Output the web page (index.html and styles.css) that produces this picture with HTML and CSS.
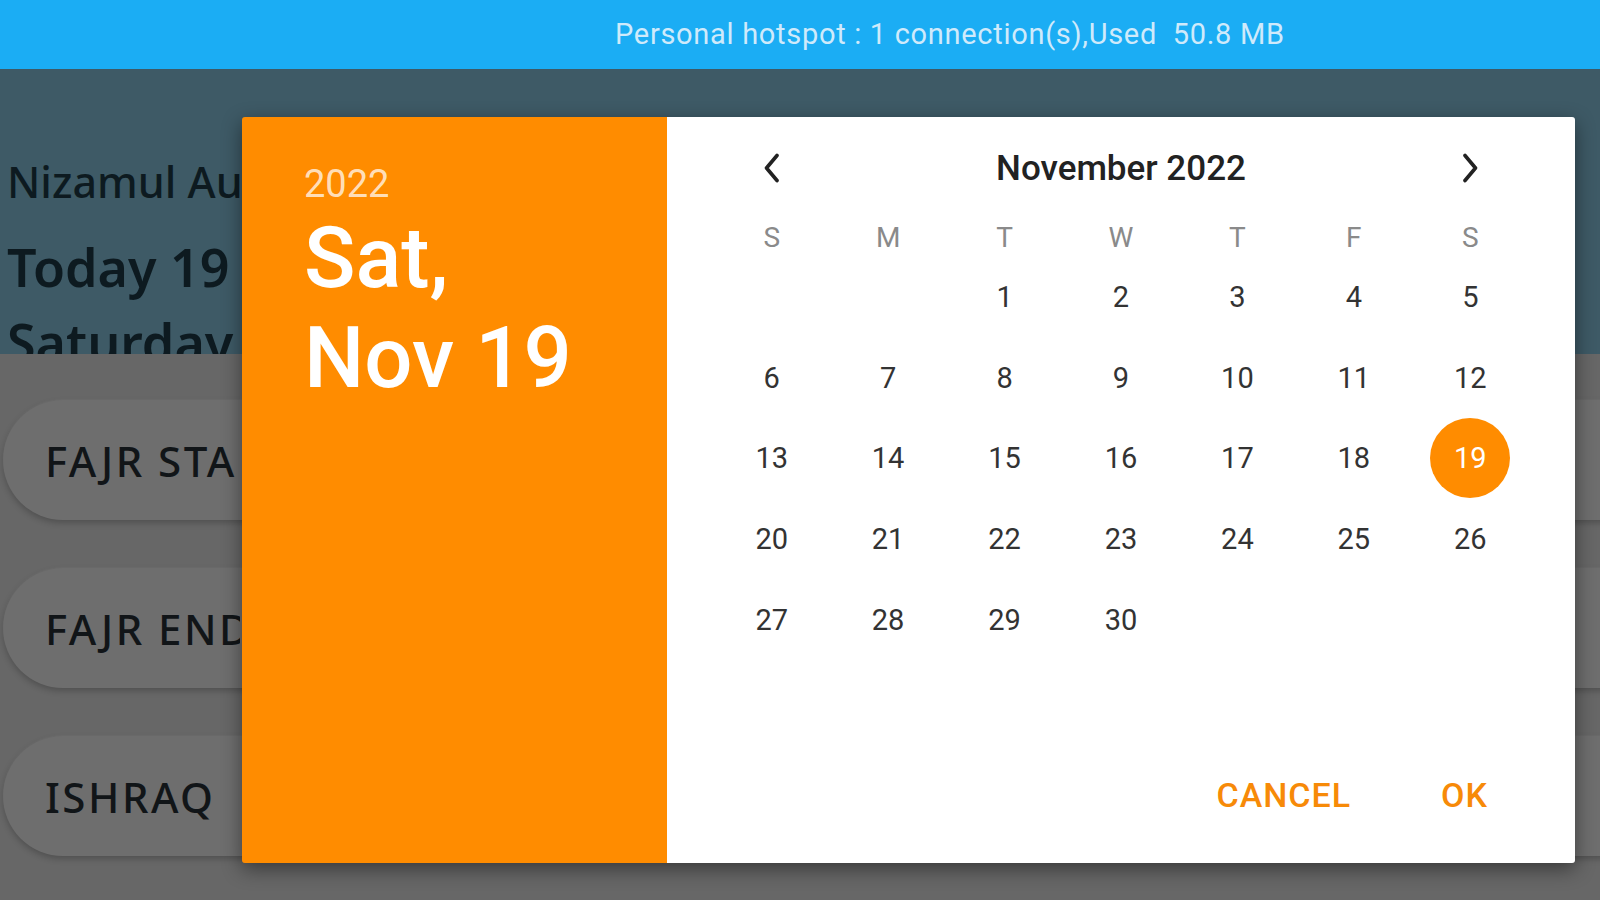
FILE: index.html
```html
<!DOCTYPE html>
<html lang="en">
<head>
<meta charset="utf-8">
<title>Date picker</title>
<link rel="stylesheet" href="styles.css">
</head>
<body>
<div class="screen">
  <div class="statusbar"><span class="status-text">Personal hotspot : 1 connection(s),Used  50.8 MB</span></div>
  <div class="app-header">
    <div class="clip">
      <div class="h-name">Nizamul Auliya Masjid</div>
      <div class="h-today">Today 19 November 2022</div>
      <div class="h-day">Saturday</div>
    </div>
  </div>
  <div class="list">
    <div class="card"><span class="card-label">FAJR START</span></div>
    <div class="card"><span class="card-label">FAJR END</span></div>
    <div class="card"><span class="card-label">ISHRAQ</span></div>
  </div>

  <div class="dialog">
    <div class="dlg-head">
      <div class="dlg-year">2022</div>
      <div class="dlg-date">Sat,<br>Nov 19</div>
    </div>
    <div class="dlg-body">
      <div class="cal">
        <div class="cal-nav">
          <span class="nav-btn"><svg width="18" height="30" viewBox="0 0 18 30"><path d="M14 2.5 L3.5 15 L14 27.5" fill="none" stroke="#222" stroke-width="3.6" stroke-linecap="round" stroke-linejoin="round"/></svg></span>
          <span class="cal-title">November 2022</span>
          <span class="nav-btn"><svg width="18" height="30" viewBox="0 0 18 30"><path d="M4 2.5 L14.5 15 L4 27.5" fill="none" stroke="#222" stroke-width="3.6" stroke-linecap="round" stroke-linejoin="round"/></svg></span>
        </div>
        <div class="cal-week">
          <span>S</span><span>M</span><span>T</span><span>W</span><span>T</span><span>F</span><span>S</span>
        </div>
        <div class="cal-days">
          <span></span><span></span><span>1</span><span>2</span><span>3</span><span>4</span><span>5</span>
          <span>6</span><span>7</span><span>8</span><span>9</span><span>10</span><span>11</span><span>12</span>
          <span>13</span><span>14</span><span>15</span><span>16</span><span>17</span><span>18</span><span class="sel"><b>19</b></span>
          <span>20</span><span>21</span><span>22</span><span>23</span><span>24</span><span>25</span><span>26</span>
          <span>27</span><span>28</span><span>29</span><span>30</span><span></span><span></span><span></span>
        </div>
      </div>
      <div class="dlg-actions">
        <span class="btn">CANCEL</span>
        <span class="btn">OK</span>
      </div>
    </div>
  </div>
</div>
</body>
</html>
```

FILE: styles.css
```css
html, body {
  margin: 0;
  padding: 0;
}
body {
  width: 1600px;
  height: 900px;
  overflow: hidden;
  font-family: Roboto, "Liberation Sans", sans-serif;
  background: #5f5f5f;
}
.screen {
  position: relative;
  width: 1600px;
  height: 900px;
  overflow: hidden;
  display: flex;
  flex-direction: column;
}
.statusbar {
  height: 69px;
  flex: none;
  background: #1badf4;
  padding-left: 615px;
  box-sizing: border-box;
}
.status-text {
  display: block;
  font-family: Roboto, sans-serif;
  font-size: 29px;
  line-height: 69px;
  letter-spacing: 0.7px;
  color: #cfeafb;
  white-space: pre;
}
.app-header {
  height: 285px;
  flex: none;
  box-sizing: border-box;
  background: #3e5a66;
  padding: 87px 0 0 7px;
  overflow: hidden;
  color: #0d1a20;
  font-family: "Noto Sans", sans-serif;
  white-space: nowrap;
}
.clip {
  width: 235px;
  overflow: hidden;
}
.h-name {
  font-size: 43px;
  line-height: 52px;
  font-weight: 500;
}
.h-today {
  margin-top: 28px;
  font-size: 52px;
  line-height: 62px;
  font-weight: 600;
}
.h-day {
  margin-top: 13px;
  font-size: 52px;
  line-height: 62px;
  font-weight: 600;
}
.list {
  flex: 1;
  background: #676767;
  padding: 46px 0 0 3px;
  display: flex;
  flex-direction: column;
  gap: 48px;
}
.card {
  height: 120px;
  width: 1700px;
  flex: none;
  box-sizing: border-box;
  border-radius: 60px;
  background: #6e6e6e;
  box-shadow: 0 3px 6px rgba(0, 0, 0, 0.22), 0 -1px 2px rgba(255, 255, 255, 0.05);
  display: flex;
  align-items: center;
  padding-left: 42px;
}
.card-label {
  display: block;
  width: 195px;
  overflow: hidden;
  white-space: nowrap;
  font-family: "Noto Sans", sans-serif;
  font-size: 42px;
  font-weight: 500;
  letter-spacing: 2.5px;
  color: #111518;
}

/* dialog */
.dialog {
  position: absolute;
  left: 242px;
  top: 117px;
  width: 1333px;
  height: 746px;
  display: flex;
  border-radius: 3px;
  overflow: hidden;
  box-shadow: 0 6px 20px rgba(0, 0, 0, 0.45);
}
.dlg-head {
  width: 425px;
  flex: none;
  background: #ff8c00;
  box-sizing: border-box;
  padding: 45px 0 0 62px;
}
.dlg-year {
  font-size: 38px;
  line-height: 44px;
  color: rgba(255, 255, 255, 0.74);
}
.dlg-date {
  margin-top: 2px;
  font-size: 85px;
  line-height: 100px;
  font-weight: 500;
  color: #ffffff;
}
.dlg-body {
  flex: 1;
  background: #ffffff;
  display: flex;
  flex-direction: column;
  padding-top: 16px;
  padding-bottom: 48px;
  box-sizing: border-box;
}
.cal {
  width: 815px;
  margin: 0 auto;
}
.cal-nav {
  height: 70px;
  display: grid;
  grid-template-columns: 116.4px 1fr 116.4px;
  align-items: center;
  margin-bottom: 14px;
}
.nav-btn {
  display: flex;
  justify-content: center;
  align-items: center;
}
.nav-btn svg {
  display: block;
}
.cal-title {
  text-align: center;
  font-size: 35px;
  font-weight: 500;
  color: #222222;
}
.cal-week {
  display: grid;
  grid-template-columns: repeat(7, 1fr);
  height: 40px;
  align-items: center;
  text-align: center;
  font-size: 28px;
  color: #8a8a8a;
}
.cal-days {
  display: grid;
  grid-template-columns: repeat(7, 1fr);
  grid-auto-rows: 80.6px;
  align-items: center;
  justify-items: center;
  font-size: 29px;
  color: #333333;
}
.cal-days span {
  display: flex;
  align-items: center;
  justify-content: center;
  width: 80px;
  height: 80px;
}
.cal-days .sel {
  background: #ff8c00;
  border-radius: 50%;
  color: #ffffff;
}
.cal-days .sel b {
  font-weight: 400;
}
.dlg-actions {
  margin-top: auto;
  display: flex;
  justify-content: flex-end;
  gap: 90px;
  padding-right: 87px;
}
.btn {
  font-size: 34px;
  line-height: 40px;
  font-weight: 500;
  letter-spacing: 1px;
  color: #f78a08;
}
```
